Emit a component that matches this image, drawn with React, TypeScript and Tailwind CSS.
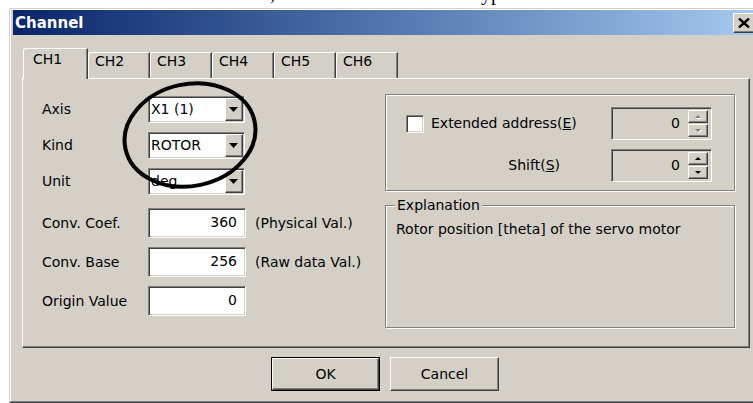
const sunken =
  'border border-t-[#808080] border-l-[#808080] border-r-white border-b-white shadow-[inset_1px_1px_0_#404040,inset_-1px_-1px_0_#d4d0c8]'
const raised =
  'border border-t-white border-l-white border-r-[#404040] border-b-[#404040] shadow-[inset_-1px_-1px_0_#808080] bg-[#d4d0c8]'
const etched = 'border border-[#808080] shadow-[inset_1px_1px_0_#ffffff,1px_1px_0_#ffffff]'

function Arrow({ up = false, w = 9, h = 5, color = '#000', shade = false }: { up?: boolean; w?: number; h?: number; color?: string; shade?: boolean }) {
  const pts = up ? `0,${h} ${w},${h} ${w / 2},0` : `0,0 ${w},0 ${w / 2},${h}`
  return (
    <svg width={w + 1} height={h + 1} viewBox={`0 0 ${w + 1} ${h + 1}`}>
      {shade && <polygon points={pts} fill="#ffffff" transform="translate(1 1)" />}
      <polygon points={pts} fill={color} />
    </svg>
  )
}

function Combo({ value }: { value: string }) {
  return (
    <div className={`flex h-[27px] w-[97px] bg-white p-[1px] ${sunken}`}>
      <span className="flex-1 pl-[1px] leading-[23px]">{value}</span>
      <div className={`flex w-[18px] items-center justify-center ${raised}`}>
        <Arrow />
      </div>
    </div>
  )
}

function NumField({ value }: { value: string }) {
  return <div className={`h-[30px] w-[98px] bg-white pr-[8px] text-right leading-[27px] ${sunken}`}>{value}</div>
}

function Spin({ disabled = false }: { disabled?: boolean }) {
  const color = disabled ? '#808080' : '#000'
  return (
    <div className={`flex h-[33px] w-[101px] bg-[#d4d0c8] p-[2px] pr-[3px] ${sunken}`}>
      <span className="flex-1 pr-[8px] text-right leading-[27px]">0</span>
      <div className="flex w-[20px] flex-col gap-[1px]">
        <div className={`flex flex-1 items-center justify-center ${raised}`}>
          <Arrow up w={6} h={3} color={color} shade={disabled} />
        </div>
        <div className={`flex flex-1 items-center justify-center ${raised}`}>
          <Arrow w={6} h={3} color={color} shade={disabled} />
        </div>
      </div>
    </div>
  )
}

function Tab({ label, active = false }: { label: string; active?: boolean }) {
  if (active) {
    return (
      <div className="relative z-10 -mb-px h-[31px] w-[65px] rounded-tl-[3px] border-l border-r border-t border-t-white border-l-white border-r-[#404040] bg-[#d4d0c8] pl-[9px] pt-[2px] leading-[16px] shadow-[inset_-1px_0_0_#808080]">
        {label}
      </div>
    )
  }
  return (
    <div className="h-[26px] w-[62px] rounded-tl-[3px] border-l border-r border-t border-t-white border-l-white border-r-[#404040] pl-[6px] leading-[16px] shadow-[inset_-1px_0_0_#808080]">
      {label}
    </div>
  )
}

export default function App() {
  const fields = [
    { label: 'Conv. Coef.', value: '360', note: '(Physical Val.)' },
    { label: 'Conv. Base', value: '256', note: '(Raw data Val.)' },
    { label: 'Origin Value', value: '0', note: '' },
  ]

  return (
    <div className="relative h-[403px] w-[753px] overflow-hidden bg-white font-['DejaVu_Sans',sans-serif] text-[14px] text-black">
      {/* bottom of the document line above the dialog */}
      <div className="h-[8px] overflow-hidden font-['Liberation_Serif',serif] text-[20px] leading-[20px]">
        <div className="-mt-[17px] flex">
          <span className="ml-[270px]">,</span>
          <span className="ml-[206px]">yp</span>
        </div>
      </div>

      <div className="ml-[9px] w-[751px] border-b border-l border-t border-[#d4d0c8] border-b-[#404040] bg-[#d4d0c8]">
        <div className="border-b border-l border-t border-white border-b-[#808080] pb-[10px] pl-[2px] pr-[3px]">
          {/* title bar */}
          <div className="flex h-[25px] items-center justify-between bg-gradient-to-r from-[#0a246a] to-[#a6caf0] pl-[2px] pr-[2px]">
            <span className="text-[15px] font-bold leading-[18px] text-white">Channel</span>
            <div className={`flex h-[20px] w-[22px] items-center justify-center ${raised}`}>
              <svg width="12" height="10" viewBox="0 0 12 10">
                <path d="M1 0.5 L11 9.5 M11 0.5 L1 9.5" stroke="#000" strokeWidth="2.4" />
              </svg>
            </div>
          </div>

          {/* tabs */}
          <div className="ml-[9px] mr-[7px] mt-[13px]">
            <div className="flex h-[30px] items-end pl-[1px]">
              <Tab label="CH1" active />
              <Tab label="CH2" />
              <Tab label="CH3" />
              <Tab label="CH4" />
              <Tab label="CH5" />
              <Tab label="CH6" />
            </div>

            <div className="flex h-[270px] border border-t-white border-l-white border-r-[#404040] border-b-[#404040] shadow-[inset_-1px_-1px_0_#808080]">
              {/* channel settings */}
              <div className="w-[362px] pl-[19px] pt-[17px]">
                <div className="flex flex-col gap-[9px]">
                  <div className="flex h-[27px] items-center">
                    <span className="w-[106px]">Axis</span>
                    <Combo value="X1 (1)" />
                  </div>
                  <div className="flex h-[27px] items-center">
                    <span className="w-[106px]">Kind</span>
                    <Combo value="ROTOR" />
                  </div>
                  <div className="flex h-[27px] items-center">
                    <span className="w-[106px]">Unit</span>
                    <Combo value="deg" />
                  </div>
                </div>
                <div className="mt-[13px] flex flex-col gap-[9px]">
                  {fields.map((f) => (
                    <div key={f.label} className="flex h-[30px] items-center">
                      <span className="w-[106px]">{f.label}</span>
                      <NumField value={f.value} />
                      <span className="ml-[9px]">{f.note}</span>
                    </div>
                  ))}
                </div>
              </div>

              {/* address + explanation */}
              <div className="w-[350px] pt-[15px]">
                <div className={`h-[97px] pl-[20px] pr-[22px] pt-[12px] ${etched}`}>
                  <div className="flex h-[33px] items-center">
                    <div className={`h-[18px] w-[18px] bg-white ${sunken}`} />
                    <span className="ml-[7px]">
                      Extended address(<span className="underline">E</span>)
                    </span>
                    <div className="ml-auto">
                      <Spin disabled />
                    </div>
                  </div>
                  <div className="mt-[9px] flex h-[33px] items-center justify-end gap-[51px]">
                    <span>
                      Shift(<span className="underline">S</span>)
                    </span>
                    <Spin />
                  </div>
                </div>

                <div className={`relative mt-[14px] h-[123px] pl-[10px] pt-[15px] ${etched}`}>
                  <span className="absolute -top-[9px] left-[9px] bg-[#d4d0c8] px-[2px] leading-[16px]">Explanation</span>
                  <p className="leading-[16px]">Rotor position [theta] of the servo motor</p>
                </div>
              </div>
            </div>
          </div>

          {/* dialog buttons */}
          <div className="mt-[9px] flex justify-center gap-[10px]">
            <div className="h-[34px] w-[109px] border border-black">
              <div className={`flex h-full items-center justify-center ${raised}`}>OK</div>
            </div>
            <div className={`flex h-[34px] w-[109px] items-center justify-center ${raised}`}>Cancel</div>
          </div>
        </div>
      </div>

      {/* hand-drawn ring around the axis / kind selectors */}
      <svg className="pointer-events-none absolute left-0 top-0" width="753" height="403">
        <ellipse cx="190" cy="135" rx="66" ry="51" transform="rotate(-12 190 135)" fill="none" stroke="#000" strokeWidth="4" />
      </svg>
    </div>
  )
}
